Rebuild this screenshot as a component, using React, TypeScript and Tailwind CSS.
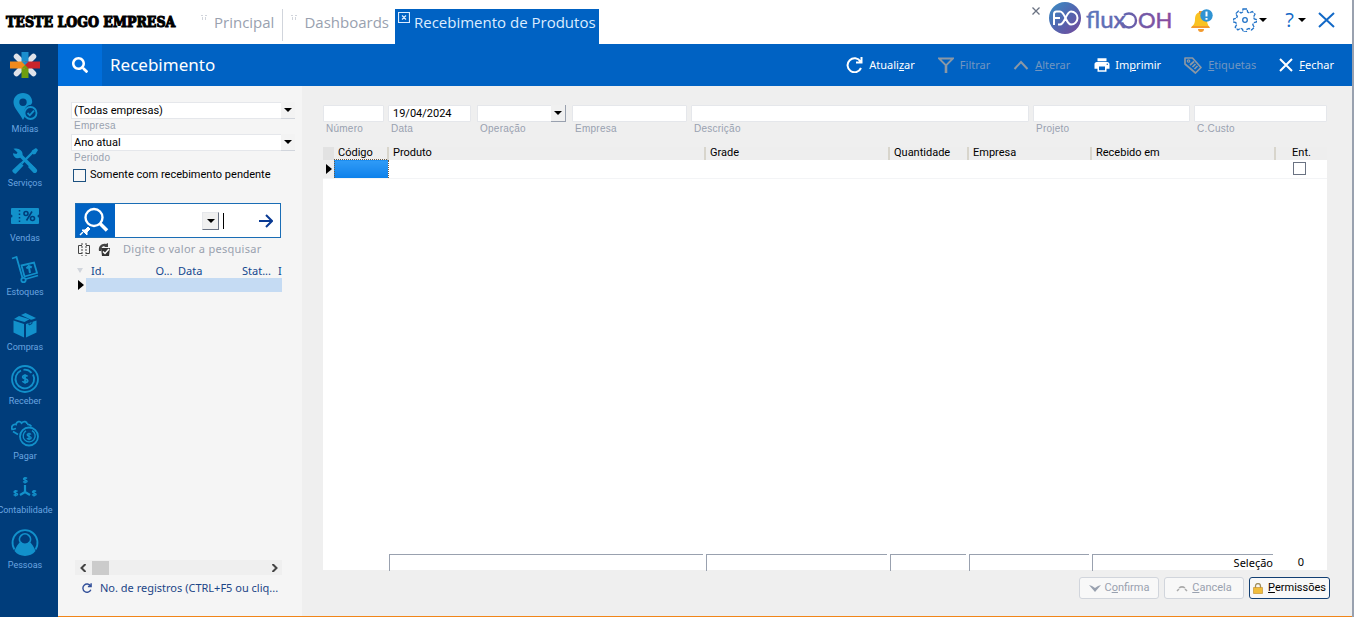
import React, { useState } from 'react';
import { FaSearch } from 'react-icons/fa';
import { MdPrint } from 'react-icons/md';

interface IconProps {
  children: React.ReactNode;
  className?: string;
}

// line icon on a 28x28 grid, used by the side menu
function MenuIcon({ children, className = '' }: IconProps) {
  return (
    <svg viewBox="0 0 28 28" className={`w-7 h-7 ${className}`} fill="none" stroke="currentColor" strokeWidth="1.8" aria-hidden="true">
      {children}
    </svg>
  );
}

function DropArrow() {
  return (
    <svg viewBox="0 0 8 4" className="w-2 h-1 fill-black" aria-hidden="true">
      <path d="M0 0h8L4 4z" />
    </svg>
  );
}

const menu = [
  {
    label: 'Mídias',
    icon: (
      <MenuIcon>
        <path d="M12 0C6.500 0 2.500 4 2.500 9.300 2.500 15 8.500 20 12 27c.8-1.500 1.500-3 2.500-4.500-3-5 .5-10.500 5.500-10.700.9-1.300 1.200-2 1.200-3C21.200 4 17.500 0 12 0zM12 5.500a3.700 3.700 0 1 1 0 7.400 3.700 3.700 0 0 1 0-7.400z" fill="currentColor" stroke="none" fillRule="evenodd" />
        <circle cx="19.500" cy="20" r="6" />
        <path d="M16.500 20l2.300 2.300 4.200-4.600" />
      </MenuIcon>
    ),
  },
  {
    label: 'Serviços',
    icon: (
      <MenuIcon>
        <path d="M23 4L10.500 16.500" strokeWidth="2.400" />
        <path d="M25 1l2 2-2.500 4-2 .5-2-2 .5-2z" fill="currentColor" stroke="none" />
        <path d="M9.500 15.500l3 3L5 26.500c-1.500 1-4.500-2-3.500-3.500z" fill="currentColor" stroke="none" />
        <path d="M8.500 7.500l15 15" strokeWidth="3.600" />
        <path d="M20 17l5.500 5c2 2-1 5.500-3.300 3.500L17 20z" fill="currentColor" stroke="none" />
        <path d="M2.500 1.800L6.500 5.500 5.500 7 2 6.200C2 10 6 12.500 9.500 10.500l2-2C12.500 4 8 .8 4 1.500z" fill="currentColor" stroke="none" />
      </MenuIcon>
    ),
  },
  {
    label: 'Vendas',
    icon: (
      <MenuIcon>
        <path d="M1 6h26a1 1 0 0 1 1 1v5.500a1.500 1.500 0 0 0 0 3V21a1 1 0 0 1-1 1H1a1 1 0 0 1-1-1v-5.500a1.500 1.500 0 0 0 0-3V7a1 1 0 0 1 1-1z" fill="currentColor" stroke="none" />
        <path d="M8.500 8v12" stroke="#003d7b" strokeDasharray="1.500 2" strokeWidth="1.500" />
        <g stroke="#003d7b" strokeWidth="1.600">
          <circle cx="15" cy="11.500" r="2" />
          <circle cx="21.500" cy="16.500" r="2" />
          <path d="M21 9.500l-5.500 9" />
        </g>
      </MenuIcon>
    ),
  },
  {
    label: 'Estoques',
    icon: (
      <MenuIcon>
        <path d="M1 2.500L5.500 1l6 21" />
        <circle cx="12.500" cy="24" r="2.200" />
        <path d="M15 23l12-3.500" />
        <path d="M10.500 9.500l12.500-3 3 10.500-12.500 3.500z" />
        <path d="M19 17l-1.200-6.500M15.500 12.500l2.300-2.500 3 1.500" strokeWidth="2" />
      </MenuIcon>
    ),
  },
  {
    label: 'Compras',
    icon: (
      <MenuIcon>
        <g fill="currentColor" stroke="none">
          <path d="M2.500 9.500L13 13v13.500L2.500 21.500z" />
          <path d="M25.500 9.500L15 13v13.500l10.500-5z" />
          <path d="M3 8l5-3 10.500 3.300L13.500 11z" />
          <path d="M10 4l4.500-2L25 7l-4.500 2z" />
        </g>
        <path d="M18 9v5l3-1.500v-4" stroke="#003d7b" strokeWidth="1" />
      </MenuIcon>
    ),
  },
  {
    label: 'Receber',
    icon: (
      <MenuIcon>
        <circle cx="14" cy="14" r="13" />
        <path d="M10 5.500A9.300 9.300 0 1 0 22 9.500M12.500 4.800a9.300 9.300 0 0 1 8 3" />
        <path d="M16.500 11.500c-1-1.700-5-1.500-4.800.6.3 2.200 4.800 1.300 5 3.500.2 2-4 2.500-5.200.5M14 9.300v9.400" />
      </MenuIcon>
    ),
  },
  {
    label: 'Pagar',
    icon: (
      <MenuIcon>
        <path d="M1.500 10C-.5 7 2 3.500 5 4.500c.5-3 4-4 5.500-1.500C13 .5 16 1.500 16 4M1.500 9.500l3.500-1M16 4.500c2-.5 3.500.5 4.500 2M2 11.500l5 3" />
        <circle cx="18" cy="16.500" r="9" />
        <path d="M15 10.800a6 6 0 1 0 6-.2" strokeWidth="1.400" />
        <path d="M20 14.500c-.8-1.300-4-1.200-3.800.4.2 1.700 3.900 1.200 4 2.900.1 1.600-3.400 1.800-4.300.3M18 12.700v7.600" strokeWidth="1.300" />
      </MenuIcon>
    ),
  },
  {
    label: 'Contabilidade',
    icon: (
      <MenuIcon>
        <path d="M14 11v7M14 18l-5 3M14 18l5 3" strokeWidth="2.200" />
        <g strokeWidth="1.400">
          <path d="M16 4.500c-.8-1-3.500-.9-3.500.4 0 1.400 3.600 1 3.600 2.400 0 1.300-3 1.400-3.900.2M14 3v6.500" />
          <path d="M6.500 17.500c-.8-1-3.500-.9-3.500.4 0 1.400 3.600 1 3.600 2.400 0 1.300-3 1.400-3.900.2M4.500 16v6.500" />
          <path d="M25 17.500c-.8-1-3.500-.9-3.500.4 0 1.400 3.600 1 3.600 2.400 0 1.300-3 1.400-3.900.2M23 16v6.500" />
        </g>
      </MenuIcon>
    ),
  },
  {
    label: 'Pessoas',
    icon: (
      <MenuIcon>
        <path d="M3.500 20.500A12.500 12.500 0 1 1 24.500 20.500" />
        <path d="M9.800 14a5.500 5.500 0 1 1 8.400 0" />
        <path d="M3.500 22c1.500-4 4-8 6.500-9.500a5 5 0 0 0 8 0c2.500 1.500 5 5.500 6.500 9.500-5 6.500-16 6.500-21 0z" fill="currentColor" stroke="none" />
      </MenuIcon>
    ),
  },
];

function Brand() {
  return (
    <svg viewBox="0 0 126 34" className="w-[126px] h-[34px] mt-px" role="img" aria-label="fluxOOH">
      <defs>
        <linearGradient id="ball" x1="0" y1="0" x2="1" y2="1">
          <stop offset="0" stopColor="#3a8fc4" />
          <stop offset="0.500" stopColor="#5166b0" />
          <stop offset="1" stopColor="#76489a" />
        </linearGradient>
        <linearGradient id="word" gradientUnits="userSpaceOnUse" x1="38" y1="0" x2="122" y2="0">
          <stop offset="0" stopColor="#5a78bd" />
          <stop offset="0.500" stopColor="#6560ab" />
          <stop offset="1" stopColor="#8a4a9e" />
        </linearGradient>
      </defs>
      <circle cx="16" cy="17" r="16" fill="url(#ball)" />
      <g fill="none" stroke="#fff" strokeWidth="2">
        <path d="M5 24V13a2.500 2.500 0 0 1 2.500-2.500H11c5 0 6 13 11 13a6.500 6.500 0 0 0 0-13c-5 0-6 13-11 13H9M5 17h6" />
      </g>
      <g fill="url(#word)" fontFamily="Lato, sans-serif" fontSize="24" stroke="url(#word)" strokeWidth=".5">
        <text x="37" y="27">flux</text>
        <text x="89" y="27" fontSize="22">OH</text>
      </g>
      <path d="M75 14c1.500-1 3-1.500 5-1.500 4 0 7 3 7 7s-3 7-7 7c-3.500 0-5.500-2-7-5" fill="none" stroke="url(#word)" strokeWidth="2.400" />
    </svg>
  );
}

function TabDots() {
  return (
    <svg viewBox="0 0 8 6" className="w-2 h-[6px] fill-gray-300 mt-[6px]" aria-hidden="true">
      <path d="M0 0h2v1H0zM4 0h2v1H4zM1 2h1v3H1zM4 2h1v3H4z" />
    </svg>
  );
}

function Header() {
  return (
    <header className="flex h-11 shrink-0 bg-white">
      <div className="w-[201px] shrink-0 pl-[6px] pt-3 text-[14px] leading-5 font-bold text-black whitespace-nowrap font-['DejaVu_Serif_Condensed','DejaVu_Serif',serif] [-webkit-text-stroke:1px_black]">
        TESTE LOGO EMPRESA
      </div>
      <nav className="flex pt-[9px] text-[15px] leading-[26px] text-gray-400 whitespace-nowrap font-['Open_Sans',sans-serif]">
        <a href="#principal" className="flex gap-[5px] pr-2 border-r border-gray-300 h-8">
          <TabDots />
          Principal
        </a>
        <a href="#dashboards" className="flex gap-[5px] pl-2 pr-[6px]">
          <TabDots />
          Dashboards
        </a>
        <a href="#recebimento" className="flex gap-1 px-[3px] bg-[#0062c3] text-[#dcecff]">
          <svg viewBox="0 0 12 11" className="w-3 h-[11px] mt-[3px]" fill="none" stroke="currentColor" aria-hidden="true">
            <path d="M.5.5h11v10H.500zM4 3.500l4 4M8 3.500l-4 4" strokeWidth="1.200" />
          </svg>
          Recebimento de Produtos
        </a>
      </nav>
      <div className="flex ml-auto pr-[17px]">
        <button type="button" aria-label="Fechar aba" className="self-start mt-[7px] mr-[9px]">
          <svg viewBox="0 0 8 8" className="w-2 h-2 stroke-gray-500" fill="none" strokeWidth="1.300"><path d="M.5.500l7 7M7.500.5l-7 7" /></svg>
        </button>
        <Brand />
        <button type="button" aria-label="Notificações" className="ml-4 self-start mt-[9px]">
          <svg viewBox="0 0 22 23" className="w-[22px] h-[23px]">
            <path d="M10 3c-4 0-6 3-6 7 0 5-1.500 6-4 8.500h19c-2.500-2.500-3-4.500-3-8.500 0-4-2-7-6-7z" fill="#f9c322" />
            <path d="M1.500 17h16l1.500 2H0z" fill="#f39a2d" />
            <path d="M7 20h6a3 3 0 0 1-6 0zM8 2h3v3H8z" fill="#f39a2d" />
            <circle cx="15.500" cy="6.500" r="6.200" fill="#2f93d3" />
            <path d="M15.500 2.500v5M15.500 9v1.800" stroke="#fff" strokeWidth="2" />
          </svg>
        </button>
        <button type="button" aria-label="Configurações" className="flex items-center gap-[2px] ml-5 h-10">
          <svg viewBox="0 0 24 24" className="w-6 h-6" fill="none" stroke="#2273c8" strokeWidth="1.300">
            <path d="M10 1h4l.6 3 2 1 2.700-1.500 2.700 2.700L20.500 9l.8 2 2.200.500v2.500l-2.800.7-.9 2 1.500 2.600-2.700 2.700-2.600-1.500-2 .8-.7 2.700h-3l-.8-2.800-2-.8-2.600 1.500-2.700-2.700 1.500-2.600-.9-2L.500 14v-3l3-.7.8-2-1.600-2.600 2.700-2.500L8 5l1.500-.8z" strokeDasharray="4 1" />
            <circle cx="12" cy="12" r="2.300" />
          </svg>
          <DropArrow />
        </button>
        <button type="button" aria-label="Ajuda" className="flex items-center gap-1 ml-[18px] h-10 text-[20px] text-[#1269c7] font-['Open_Sans',sans-serif]">
          ?
          <DropArrow />
        </button>
        <button type="button" aria-label="Sair" className="ml-3 h-10">
          <svg viewBox="0 0 17 16" className="w-[17px] h-4 stroke-[#1269c7]" fill="none" strokeWidth="2"><path d="M1 1l15 14M16 1L1 15" /></svg>
        </button>
      </div>
    </header>
  );
}

function SideMenu() {
  return (
    <nav className="flex flex-col w-[58px] shrink-0 pr-2 pb-[41px] bg-[#003d7b]">
      <a href="#inicio" aria-label="Início" className="flex h-[42px] items-center justify-center">
        <svg viewBox="0 0 30 28" className="w-[30px] h-7" strokeWidth="7">
          <path d="M6.500 5.500l17 17M23.500 5.500l-17 17" stroke="#dfe3ea" strokeWidth="5.500" strokeLinecap="round" />
          <path d="M15 1v13" stroke="#1b8fce" />
          <path d="M15 14v13" stroke="#6f9f10" />
          <path d="M0 14h15" stroke="#f08a1d" />
          <path d="M15 14h15" stroke="#c9252c" />
          <path d="M11.500 10.500h7l-3.500 3.500z" fill="#1b8fce" stroke="none" />
          <path d="M11.500 17.500l3.500-3.500 3.500 3.500z" fill="#6f9f10" stroke="none" />
        </svg>
      </a>
      {menu.map((item) => (
        <a key={item.label} href={`#${item.label}`} className="flex flex-1 flex-col items-center pt-[7px] text-[#1291cb]">
          {item.icon}
          <span className="mt-[2px] text-[9px] leading-3 text-[#6aa5e0] whitespace-nowrap font-['Roboto',sans-serif]">{item.label}</span>
        </a>
      ))}
    </nav>
  );
}

function Toolbar() {
  return (
    <div className="flex items-center h-[42px] shrink-0 pr-[18px] bg-[#0062c3] text-white">
      <button type="button" aria-label="Pesquisar" className="flex items-center justify-center w-11 h-full bg-[#006edb]">
        <FaSearch className="w-4 h-4" />
      </button>
      <h1 className="pl-2 text-[17px] leading-6 font-['Noto_Sans',sans-serif]">Recebimento</h1>
      <div className="flex items-center gap-[23px] ml-auto text-[11px] whitespace-nowrap font-['Noto_Sans',sans-serif]">
        <button type="button" className="flex items-center gap-[6px]">
          <svg viewBox="0 0 17 16" className="w-[17px] h-4" fill="none" stroke="currentColor" strokeWidth="2">
            <path d="M14.500 4.500A7 7 0 1 0 15 11M15.500 0v5.500H10" />
          </svg>
          <span>Atuali<u>z</u>ar</span>
        </button>
        <button type="button" disabled className="flex items-center gap-[6px] text-[#7296c0]">
          <svg viewBox="0 0 16 16" className="w-4 h-4" fill="none" stroke="#8b98a5" strokeWidth="1.800">
            <path d="M1 1.500h14L8 8.500z" />
            <path d="M8 8.500V16" strokeWidth="2.600" />
          </svg>
          <span>Filtrar</span>
        </button>
        <button type="button" disabled className="flex items-center gap-[6px] text-[#7296c0]">
          <svg viewBox="0 0 16 16" className="w-4 h-4" fill="none" stroke="#8b98a5" strokeWidth="2">
            <path d="M1.500 12L8 5l6.500 7" />
          </svg>
          <span><u>A</u>lterar</span>
        </button>
        <button type="button" className="flex items-center gap-1">
          <MdPrint className="w-[18px] h-[18px]" />
          <span>Im<u>p</u>rimir</span>
        </button>
        <button type="button" disabled className="flex items-center gap-[6px] text-[#7296c0]">
          <svg viewBox="0 0 18 17" className="w-[18px] h-[17px]" fill="none" stroke="#8b98a5" strokeWidth="1.700">
            <path d="M1 1h7.500L17 10.500 11.500 16 1 7z" strokeLinejoin="round" />
            <circle cx="4.500" cy="4" r="1.200" strokeWidth="1.200" />
            <path d="M6 8l4-3.500M8.500 10l3-3M10.500 12l3-3" />
          </svg>
          <span><u>E</u>tiquetas</span>
        </button>
        <button type="button" className="flex items-center gap-[6px]">
          <svg viewBox="0 0 14 14" className="w-[14px] h-[14px]" fill="none" stroke="currentColor" strokeWidth="2">
            <path d="M1 1l12 12M13 1L1 13" />
          </svg>
          <span><u>F</u>echar</span>
        </button>
      </div>
    </div>
  );
}

interface ComboProps {
  id: string;
  label: string;
  options: string[];
}

function FilterCombo({ id, label, options }: ComboProps) {
  return (
    <div className="pb-[2px]">
      <div className="relative">
        <select id={id} className="block w-full h-[17px] appearance-none bg-white border border-gray-200 pl-[2px] pr-4 text-[11px] leading-[15px] text-black">
          {options.map((o) => <option key={o}>{o}</option>)}
        </select>
        <span className="absolute right-0 top-0 flex items-center justify-center w-[14px] h-[17px] bg-[#f3f3f3] border-b border-gray-300 pointer-events-none">
          <DropArrow />
        </span>
      </div>
      <label htmlFor={id} className="block pl-[3px] text-[10px] leading-[13px] text-gray-400 tracking-wide font-['Liberation_Sans',sans-serif]">{label}</label>
    </div>
  );
}

function FilterPanel() {
  const [pending, setPending] = useState(false);

  return (
    <aside className="flex flex-col w-[244px] shrink-0 pt-4 pb-[19px] pl-[13px] pr-[7px] bg-[#f5f5f5]">
      <FilterCombo id="empresas" label="Empresa" options={['(Todas empresas)']} />
      <FilterCombo id="periodo" label="Periodo" options={['Ano atual']} />
      <label className="flex items-center gap-1 mt-px pl-[2px] text-[11px] leading-4 text-black whitespace-nowrap">
        <input type="checkbox" checked={pending} onChange={(e) => setPending(e.target.checked)} className="appearance-none w-[13px] h-[13px] border border-[#1c5180] bg-[#f7f7f7] checked:bg-[#1c5180]" />
        Somente com recebimento pendente
      </label>

      <div className="flex flex-col flex-1 mt-5 pl-1 pr-[13px]">
        <div className="flex h-[35px] mr-px border border-[#1a6db5] bg-white">
          <button type="button" aria-label="Pesquisar registros" className="flex items-center justify-center w-[39px] bg-[#0062c3]">
            <svg viewBox="0 0 34 32" className="w-[34px] h-8" fill="none" stroke="#fff">
              <circle cx="15" cy="12.500" r="8.500" strokeWidth="2.400" />
              <path d="M21 18.500l7 7" strokeWidth="3.500" />
              <path d="M1 30l3-3" strokeWidth="1.500" />
              <path d="M3 25l3 0 3-3 2 2-3 3 0 3z" fill="#fff" />
            </svg>
          </button>
          <div className="flex items-center flex-1">
            <div className="relative ml-auto">
              <select aria-label="Campo" className="block w-[17px] h-[18px] appearance-none border border-gray-200 border-r-gray-500 border-b-gray-500 bg-[#f0f0f0]">
                <option></option>
              </select>
              <span className="absolute inset-0 flex items-center justify-center pointer-events-none">
                <DropArrow />
              </span>
            </div>
            <input aria-label="Valor a pesquisar" className="w-9 h-4 ml-1 border-l border-black outline-none text-[11px]" />
            <button type="button" aria-label="Buscar" className="mr-[7px]">
              <svg viewBox="0 0 14 14" className="w-[14px] h-[14px] stroke-[#0a3a93]" fill="none" strokeWidth="2"><path d="M0 7h13M7 1l6 6-6 6" /></svg>
            </button>
          </div>
        </div>
        <div className="flex items-center gap-2 h-[22px] pl-[3px]">
          <svg viewBox="0 0 12 13" className="w-3 h-[13px]" fill="none" stroke="#444">
            <path d="M4 2.500H.500v8H4M8 2.500h3.500v8H8" />
            <path d="M4 0v13M8 0v13" strokeDasharray="2 1" />
          </svg>
          <svg viewBox="0 0 13 13" className="w-[13px] h-[13px]">
            <path d="M3 5h9l-1 8H4z" fill="#333" />
            <path d="M1 8C0 3 4 0 8 1l2-1v4H6l1-1C5 3 3 4 3 8z" fill="#444" />
            <path d="M5 8.500l2 2 4-4.500" stroke="#fff" strokeWidth="1.500" fill="none" />
          </svg>
          <span className="pl-1 text-[11px] text-gray-400 tracking-wide font-['Noto_Sans',sans-serif]">Digite o valor a pesquisar</span>
        </div>
        <table className="table-fixed w-full mt-[3px] text-[11px] leading-[14px] text-[#12478f] text-left whitespace-nowrap font-['Noto_Sans',sans-serif]">
          <thead>
            <tr className="h-[15px]">
              <th className="w-[11px] p-0"><svg viewBox="0 0 6 6" className="w-[6px] h-[6px] ml-[2px] fill-gray-300"><path d="M0 0h6L3 5z" /></svg></th>
              <th className="w-[65px] p-0 pl-[5px] font-normal border-r border-gray-100">Id.</th>
              <th className="w-[23px] p-0 pl-1 font-normal">O...</th>
              <th className="w-[63px] p-0 pl-1 font-normal">Data</th>
              <th className="w-9 p-0 pl-[5px] font-normal">Stat...</th>
              <th className="p-0 pl-[5px] font-normal">I</th>
            </tr>
          </thead>
          <tbody>
            <tr className="h-[14px]">
              <td className="p-0"><svg viewBox="0 0 6 10" className="w-[6px] h-[10px] ml-[3px]"><path d="M0 0l6 5-6 5z" /></svg></td>
              <td colSpan={5} className="p-0 bg-[#c5dbf3]"></td>
            </tr>
          </tbody>
        </table>
        <div className="flex items-center h-[15px] mt-auto px-1 bg-[#efefef]">
          <svg viewBox="0 0 6 8" className="w-[6px] h-2 ml-px" fill="none" stroke="#444" strokeWidth="2"><path d="M5.500 0L1.500 4l4 4" /></svg>
          <span className="ml-[6px] w-[17px] h-[14px] bg-[#cbcbcb]"></span>
          <svg viewBox="0 0 6 8" className="w-[6px] h-2 ml-auto" fill="none" stroke="#444" strokeWidth="2"><path d="M.5 0l4 4-4 4" /></svg>
        </div>
        <button type="button" className="flex items-center gap-2 mt-1 pl-[7px] text-[11px] leading-[18px] text-[#1c4587] whitespace-nowrap font-['Noto_Sans',sans-serif]">
          <svg viewBox="0 0 17 16" className="w-[10px] h-[10px] shrink-0" fill="none" stroke="#33509a" strokeWidth="2.400">
            <path d="M14.500 4.500A7 7 0 1 0 15 11M15.500 0v5.500H10" />
          </svg>
          No. de registros (CTRL+F5 ou cliq...
        </button>
      </div>
    </aside>
  );
}

interface FieldProps {
  id: string;
  label: string;
  className: string;
  value?: string;
}

function Field({ id, label, className, value }: FieldProps) {
  return (
    <div className={className}>
      <input id={id} defaultValue={value} className="block w-full h-[17px] px-1 border border-gray-200 rounded-[1px] bg-white text-[11px] text-black outline-none" />
      <label htmlFor={id} className="block pl-[3px] text-[10px] leading-[14px] text-gray-400 tracking-wide font-['Liberation_Sans',sans-serif]">{label}</label>
    </div>
  );
}

const columns = [
  { label: 'Código', width: 'w-[54px]' },
  { label: 'Produto', width: 'w-auto' },
  { label: 'Grade', width: 'w-[184px]' },
  { label: 'Quantidade', width: 'w-[79px]' },
  { label: 'Empresa', width: 'w-[123px]' },
  { label: 'Recebido em', width: 'w-[184px]' },
];

function ReceiptForm() {
  return (
    <main className="flex flex-col flex-1 min-w-0 pt-[19px] pl-[21px] pr-[25px] bg-[#efefef]">
      <div className="flex gap-1">
        <Field id="numero" label="Número" className="w-[61px]" />
        <Field id="data" label="Data" className="w-[83px]" value="19/04/2024" />
        <div className="w-[89px] mx-[2px]">
          <div className="relative">
            <select id="operacao" className="block w-full h-[17px] appearance-none bg-white border border-gray-200 text-[11px]">
              <option></option>
            </select>
            <span className="absolute right-0 top-0 flex items-center justify-center w-[15px] h-[17px] bg-[#f0f0f0] border-b border-r border-gray-400 pointer-events-none">
              <DropArrow />
            </span>
          </div>
          <label htmlFor="operacao" className="block pl-[3px] text-[10px] leading-[14px] text-gray-400 tracking-wide font-['Liberation_Sans',sans-serif]">Operação</label>
        </div>
        <Field id="empresa" label="Empresa" className="w-[115px]" />
        <Field id="descricao" label="Descrição" className="flex-1 min-w-0" />
        <Field id="projeto" label="Projeto" className="w-[157px]" />
        <Field id="custo" label="C.Custo" className="w-[133px]" />
      </div>

      <div className="flex flex-col flex-1 mt-[11px] bg-white text-[11px] leading-3 text-black">
        <table className="table-fixed w-full text-left">
          <thead>
            <tr className="h-3 bg-[#eeeeee]">
              <th className="w-[11px] p-0 bg-[#e2e2e2]"></th>
              {columns.map((c) => (
                <th key={c.label} className={`${c.width} p-0 pl-1 font-normal border-r-2 border-r-[#d8d5cc] whitespace-nowrap`}>{c.label}</th>
              ))}
              <th className="w-[52px] p-0 font-normal text-center">Ent.</th>
            </tr>
          </thead>
          <tbody>
            <tr className="h-[19px] border-b border-gray-100">
              <td className="p-0 bg-[#eeeeee]"><svg viewBox="0 0 6 10" className="w-[6px] h-[10px] ml-[3px]"><path d="M0 0l6 5-6 5z" /></svg></td>
              <td className="p-0 bg-linear-to-b from-[#2f9bf7] to-[#0a80ea] border border-dotted border-[#6b5a45]"></td>
              <td className="p-0"></td>
              <td className="p-0"></td>
              <td className="p-0"></td>
              <td className="p-0"></td>
              <td className="p-0"></td>
              <td className="p-0 pr-1">
                <input type="checkbox" aria-label="Ent." className="block mx-auto appearance-none w-[13px] h-[13px] border border-gray-500 bg-white checked:bg-gray-500" />
              </td>
            </tr>
          </tbody>
        </table>
        <div className="grid grid-cols-[65px_minmax(0,1fr)_184px_79px_123px_184px_52px] h-4 mt-auto leading-4 font-['Noto_Sans',sans-serif]">
          <span></span>
          <span className="ml-px mr-[2px] border-t border-l border-gray-400"></span>
          <span className="ml-px mr-[2px] border-t border-l border-gray-400"></span>
          <span className="ml-px mr-[2px] border-t border-l border-gray-400"></span>
          <span className="ml-px mr-[2px] border-t border-l border-gray-400"></span>
          <span className="ml-px mr-[2px] border-t border-l border-gray-400 text-right">Seleção</span>
          <span className="text-center">0</span>
        </div>
      </div>

      <div className="flex justify-end gap-[5px] pt-[7px] pb-[17px] -mr-[3px] text-[11px]">
        <button type="button" disabled className="flex items-center justify-center gap-1 w-20 h-[22px] border border-gray-300 rounded-[3px] bg-[#f8f8f8] text-gray-400">
          <svg viewBox="0 0 12 8" className="w-3 h-2 fill-gray-400"><path d="M0 1l3 1 3 2 3-2 3-1-6 7z" /></svg>
          <span>C<u>o</u>nfirma</span>
        </button>
        <button type="button" disabled className="flex items-center justify-center gap-1 w-20 h-[22px] border border-gray-300 rounded-[3px] bg-[#f8f8f8] text-gray-400">
          <svg viewBox="0 0 12 8" className="w-3 h-2" fill="none" stroke="#aaa" strokeWidth="1.500"><path d="M1 7l2-2M11 7L9 5M3 4c2-1.500 4-1.500 6 0" /></svg>
          <span><u>C</u>ancela</span>
        </button>
        <button type="button" className="flex items-center justify-center gap-[5px] w-[81px] h-[22px] border border-[#123f73] rounded-[3px] bg-[#f8f8f8] text-black">
          <svg viewBox="0 0 10 11" className="w-[10px] h-[11px] shrink-0">
            <path d="M2.500 5V3a2.500 2.500 0 0 1 5 0v2" fill="none" stroke="#a08f60" strokeWidth="1.300" />
            <path d="M.5 4.500h9v6h-9z" fill="#f0bd3c" stroke="#bf8a22" strokeWidth=".6" />
          </svg>
          <span><u>P</u>ermissões</span>
        </button>
      </div>
    </main>
  );
}

export default function App() {
  return (
    <div className="flex flex-col h-screen border-r-2 border-gray-400 bg-white overflow-hidden font-['Roboto',sans-serif]">
      <Header />
      <div className="flex flex-1 min-h-0">
        <SideMenu />
        <div className="flex flex-col flex-1 min-w-0 border-b border-[#f08519]">
          <Toolbar />
          <div className="flex flex-1 min-h-0">
            <FilterPanel />
            <ReceiptForm />
          </div>
        </div>
      </div>
    </div>
  );
}
